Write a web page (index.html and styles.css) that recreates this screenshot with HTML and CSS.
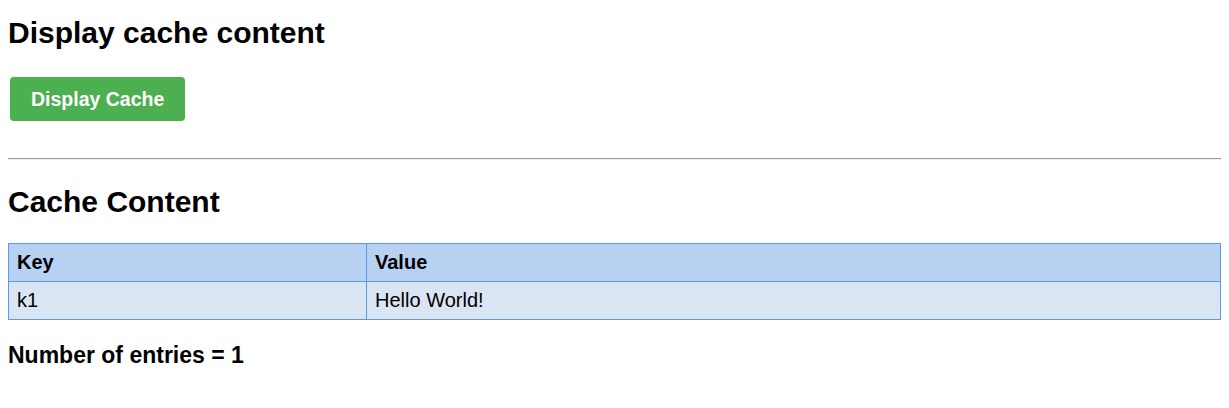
FILE: index.html
```html
<!DOCTYPE html>
<html>
<head>
<meta charset="utf-8">
<title>Display cache content</title>
<link rel="stylesheet" href="styles.css">
</head>
<body>
<h2 class="title">Display cache content</h2>
<button class="btn" type="button">Display Cache</button>
<hr class="sep">
<h2 class="subtitle">Cache Content</h2>
<table class="cache">
  <thead>
    <tr><th class="key">Key</th><th>Value</th></tr>
  </thead>
  <tbody>
    <tr><td class="key">k1</td><td>Hello World!</td></tr>
  </tbody>
</table>
<h3 class="count">Number of entries = 1</h3>
</body>
</html>
```
FILE: styles.css
```css
html, body {
  background: #ffffff;
}
body {
  margin: 0 8px 8px 8px;
  padding-top: 1px;
  font-family: "Liberation Sans", Arial, sans-serif;
  color: #000;
}
.title {
  font-size: 30px;
  line-height: 35px;
  font-weight: bold;
  margin: 14px 0 27px 0;
}
.btn {
  display: block;
  margin: 0 0 0 2px;
  height: 44px;
  padding: 0 21px;
  background: #4caf50;
  color: #fff;
  border: none;
  border-radius: 4px;
  font-family: "Liberation Sans", Arial, sans-serif;
  font-size: 19.5px;
  font-weight: bold;
}
.sep {
  margin: 37px 0 0 0;
  border: none;
  border-top: 1px solid #999;
  border-bottom: 1px solid #eee;
  height: 0;
}
.subtitle {
  font-size: 30px;
  line-height: 35px;
  font-weight: bold;
  margin: 24px 0 24px 0;
}
.cache {
  width: 100%;
  border-collapse: collapse;
  font-size: 20px;
}
.cache th, .cache td {
  border: 1px solid #5b9ae8;
  padding: 9px 8px;
  line-height: 19px;
  text-align: left;
}
.cache th {
  background: #b8d1f3;
  font-weight: bold;
}
.cache td {
  background: #dae5f4;
}
.cache .key {
  width: 341px;
}
.count {
  font-size: 23px;
  line-height: 27px;
  font-weight: bold;
  margin: 22px 0 0 0;
}
```
